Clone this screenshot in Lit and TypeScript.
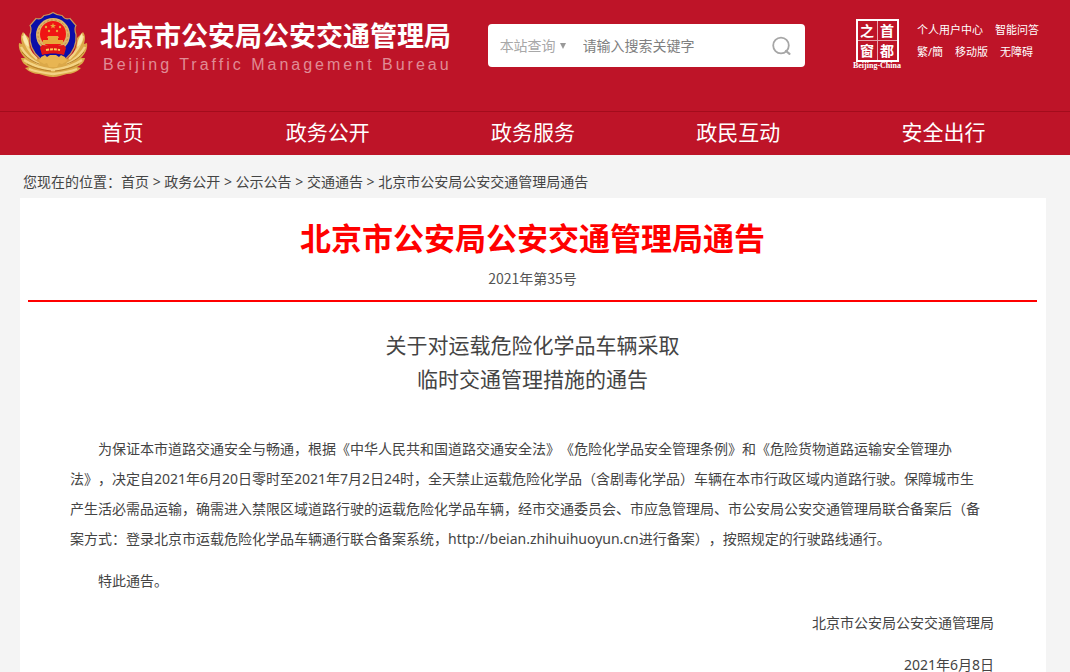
import { LitElement, html, css, svg } from "lit";
import { customElement } from "lit/decorators.js";

const NAV = ["首页", "政务公开", "政务服务", "政民互动", "安全出行"];
const CRUMBS = ["首页", "政务公开", "公示公告", "交通通告"];
const LINKS = [
  ["个人用户中心", "智能问答"],
  ["繁/簡", "移动版", "无障碍"],
];

const STAR =
  "M0-3.2.8-1 3-1 1.2.4 1.9 2.6 0 1.3-1.9 2.6-1.2.4-3-1-.8-1z";

@customElement("police-emblem")
class PoliceEmblem extends LitElement {
  static styles = css`
    :host {
      display: block;
      flex: none;
      width: 70px;
      height: 68px;
    }
    .art {
      display: block;
      width: 100%;
      height: 100%;
    }
  `;

  render() {
    const wing = svg`
      <path d="M5 21C2 25 3 29 4 33L1 32c-1 6 2 11 6 15l-4 0c1 5 4 7 8 9l-4 1c4 4 9 6 14 6 5 1 9 3 14 3V50L18 47C13 42 11 34 11 27z" fill="#dba848"/>
      <path d="M5 25c2 8 6 16 14 23M3 36c4 7 9 12 18 17M6 49c7 5 16 8 29 10M11 58c8 3 16 4 24 5" fill="none" stroke="#f3d385" stroke-width="2.400"/>
      <path d="M4 41c5 6 10 9 17 12M9 53c7 4 15 6 24 7" fill="none" stroke="#a8701f" stroke-width=".8"/>
      <path d="M6 22c3 4 5 9 5 14-5-3-7-8-5-14z" fill="#fbe9ae"/>`;
    return html`
      <svg class="art" viewBox="0 0 70 68" role="img" aria-label="警徽">
        ${wing}
        <g transform="matrix(-1 0 0 1 70 0)">${wing}</g>
        <path
          d="M35 1.500c3 2 6 3 9 3 2 3 5 4 8 3l6 7c-2 3-1 6 0 9 1 11-4 19-10 24-5 3-9 4-13 7-4-3-8-4-13-7-6-5-11-13-10-24 1-3 2-6 0-9l6-7c3 1 6 0 8-3 3 0 6-1 9-3z"
          fill="#0b0da8"
          stroke="#c99a5a"
          stroke-width="1.200"
        />
        <path
          d="M23 46l4-2 2 2 3-2h6l3 2 2-2 4 2 2 4-5 3-3-1-2 4h-8l-2-4-3 1-5-3z"
          fill="#e8b552"
        />
        <circle cx="35" cy="24" r="17" fill="#deb468" />
        <circle cx="35" cy="24" r="15" fill="none" stroke="#c28c3c" stroke-width="1" stroke-dasharray="2 2" />
        <circle cx="35" cy="23" r="13" fill="#f01414" />
        <g fill="#e8a83c">
          <path transform="translate(35 15)" d=${STAR} />
          <circle cx="28" cy="16" r="1.200" />
          <circle cx="42" cy="16" r="1.200" />
          <circle cx="31" cy="20" r="1.200" />
          <circle cx="39" cy="20" r="1.200" />
          <path d="M30 25h10l1 2h-1v2h5v4H25v-4h5v-2h-1z" />
        </g>
        <path d="M24 34c7 1 15 1 22 0l2 3-2 7c-8-2-14-2-22 0l-2-7z" fill="#e01616" />
        <path d="M28 39c5-1 9-1 14 0" fill="none" stroke="#ffcf5a" stroke-width="2" stroke-dasharray="3 1" />
      </svg>
    `;
  }
}

@customElement("app-root")
class AppRoot extends LitElement {
  static styles = css`
    :host {
      display: block;
      min-height: 100vh;
      background: #f4f4f4;
      color: #444;
      font: 14px/30px "Noto Sans", "Noto Sans CJK SC", sans-serif;
      text-spacing-trim: space-all;
    }
    a {
      color: inherit;
      text-decoration: none;
    }
    .header {
      background: #be1428;
      color: #fff;
    }
    .top {
      display: flex;
      height: 111px;
      padding: 0 24px 0 18px;
      box-sizing: border-box;
    }
    .emblem {
      margin-top: 11px;
    }
    .brand {
      flex: none;
      margin: 17px 0 0 12px;
    }
    .name {
      margin: 0;
      font-size: 27px;
      line-height: 38px;
      font-weight: 700;
      white-space: nowrap;
    }
    .english {
      margin: 0 0 0 3px;
      font: 16px/20px "Liberation Sans", sans-serif;
      letter-spacing: 3px;
      color: #e08c96;
      white-space: nowrap;
    }
    .search {
      display: flex;
      align-items: center;
      flex: 0 1 317px;
      min-width: 0;
      height: 43px;
      margin: 24px 0 0 36px;
      padding: 0 12px;
      box-sizing: border-box;
      background: #fff;
      border-radius: 4px;
    }
    .scope {
      display: flex;
      align-items: center;
      flex: none;
      width: 66px;
      margin-right: 17px;
    }
    .scope-select {
      appearance: none;
      width: 58px;
      padding: 0;
      border: 0;
      background: none;
      color: #a8a8a8;
      font: inherit;
      line-height: 24px;
    }
    .arrow {
      flex: none;
      width: 6px;
      height: 6px;
      margin-left: 2px;
    }
    .query {
      flex: 1;
      min-width: 0;
      padding: 0;
      border: 0;
      outline: 0;
      background: none;
      color: #333;
      font: inherit;
      line-height: 24px;
    }
    .query::placeholder {
      color: #808080;
      opacity: 1;
    }
    .go {
      flex: none;
      width: 22px;
      height: 22px;
      padding: 0;
      border: 0;
      background: none;
    }
    .go-icon {
      display: block;
      width: 22px;
      height: 22px;
    }
    .seal {
      display: flex;
      flex-direction: column;
      align-items: center;
      flex: none;
      width: 50px;
      margin: 19px 0 0 auto;
    }
    .seal-grid {
      display: grid;
      grid-template-columns: 1fr 1fr;
      gap: 1px;
      width: 43px;
      height: 43px;
      box-sizing: border-box;
      border: 2px solid #fff;
      background: #e9a5ad;
    }
    .seal-char {
      background: #be1428;
      font-size: 14px;
      line-height: 19px;
      font-weight: 700;
      text-align: center;
    }
    .seal-caption {
      font: 700 8px/8px "Liberation Serif", serif;
      white-space: nowrap;
    }
    .links {
      flex: none;
      width: 129px;
      margin: 19px 0 0 15px;
    }
    .link-row {
      display: flex;
      gap: 12px;
      font-size: 11px;
      line-height: 22px;
      white-space: nowrap;
    }
    .nav {
      display: grid;
      grid-template-columns: repeat(5, 1fr);
      padding: 0 24px 3px 20px;
      border-top: 1px solid #a30c1c;
      font-size: 21px;
      line-height: 40px;
      text-align: center;
    }
    .main {
      padding: 0 24px 0 20px;
    }
    .crumbs {
      height: 43px;
      padding: 0 3px;
      line-height: 53px;
      white-space: nowrap;
      box-sizing: border-box;
    }
    .card {
      padding: 17px 9px 0 8px;
      background: #fff;
    }
    .title {
      margin: 0;
      color: #f00;
      font-size: 31px;
      line-height: 46px;
      font-weight: 700;
      text-align: center;
    }
    .number {
      margin: 0;
      padding: 4px 0 9px;
      border-bottom: 2px solid #f00;
      font-family: "Noto Sans CJK SC", sans-serif;
      line-height: 26px;
      text-align: center;
      color: #555;
    }
    .subject {
      margin: 26px 0 38px;
      font-size: 21px;
      line-height: 34px;
      font-weight: 400;
      text-align: center;
    }
    .body {
      padding: 0 43px 0 42px;
    }
    .para {
      margin: 0 6px 12px 0;
      text-indent: 2em;
    }
    .sign {
      margin: 0 0 12px;
      text-align: right;
    }
    .sign:last-child {
      margin: 0;
    }
  `;

  render() {
    return html`
      <header class="header">
        <div class="top">
          <police-emblem class="emblem"></police-emblem>
          <div class="brand">
            <p class="name">北京市公安局公安交通管理局</p>
            <p class="english">Beijing Traffic Management Bureau</p>
          </div>
          <form class="search" @submit=${(e: Event) => e.preventDefault()}>
            <div class="scope">
              <select class="scope-select" aria-label="查询范围">
                <option>本站查询</option>
              </select>
              <svg class="arrow" viewBox="0 0 6 6" aria-hidden="true">
                <path d="M0 0h6L3 6z" fill="#999" />
              </svg>
            </div>
            <input class="query" type="text" aria-label="搜索关键字" placeholder="请输入搜索关键字" />
            <button class="go" type="submit" aria-label="搜索">
              <svg class="go-icon" viewBox="0 0 22 22" fill="none" stroke="#a6a6a6" stroke-width="1.800">
                <circle cx="10" cy="10.500" r="7.800" />
                <path d="M15 16l3.500 2.800" stroke-width="2.200" stroke-linecap="round" />
              </svg>
            </button>
          </form>
          <a class="seal" href="#" aria-label="首都之窗">
            <span class="seal-grid">
              ${["之", "首", "窗", "都"].map((c) => html`<span class="seal-char">${c}</span>`)}
            </span>
            <span class="seal-caption">Beijing-China</span>
          </a>
          <div class="links">
            ${LINKS.map(
              (row) => html`<div class="link-row">${row.map((t) => html`<a href="#">${t}</a>`)}</div>`
            )}
          </div>
        </div>
        <nav class="nav">${NAV.map((t) => html`<a href="#">${t}</a>`)}</nav>
      </header>
      <main class="main">
        <div class="crumbs">您现在的位置：${CRUMBS.map((t) => html`<a href="#">${t}</a> &gt; `)}北京市公安局公安交通管理局通告</div>
        <article class="card">
          <h1 class="title">北京市公安局公安交通管理局通告</h1>
          <p class="number">2021年第35号</p>
          <h2 class="subject">关于对运载危险化学品车辆采取<br />临时交通管理措施的通告</h2>
          <div class="body">
            <p class="para">为保证本市道路交通安全与畅通，根据《中华人民共和国道路交通安全法》《危险化学品安全管理条例》和《危险货物道路运输安全管理办法》，决定自2021年6月20日零时至2021年7月2日24时，全天禁止运载危险化学品（含剧毒化学品）车辆在本市行政区域内道路行驶。保障城市生产生活必需品运输，确需进入禁限区域道路行驶的运载危险化学品车辆，经市交通委员会、市应急管理局、市公安局公安交通管理局联合备案后（备案方式：登录北京市运载危险化学品车辆通行联合备案系统，http://beian.zhihuihuoyun.cn进行备案），按照规定的行驶路线通行。</p>
            <p class="para">特此通告。</p>
            <p class="sign">北京市公安局公安交通管理局</p>
            <p class="sign">2021年6月8日</p>
          </div>
        </article>
      </main>
    `;
  }
}
